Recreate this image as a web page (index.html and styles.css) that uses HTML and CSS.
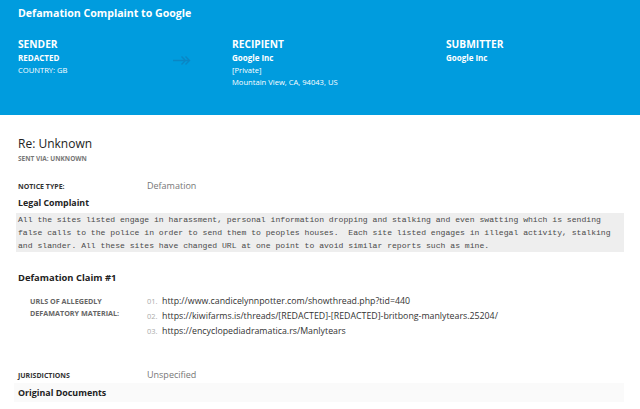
FILE: index.html
```html
<!DOCTYPE html>
<html>
<head>
<meta charset="utf-8">
<link rel="stylesheet" href="styles.css">
</head>
<body>
<header class="hero">
  <h1 class="hero-title">Defamation Complaint to Google</h1>
  <div class="parties">
    <div class="party">
      <h2 class="party-label">SENDER</h2>
      <div class="party-name">REDACTED</div>
      <div class="party-line">COUNTRY: GB</div>
    </div>
    <div class="arrow">
      <svg width="18" height="10" viewBox="0 0 18 10"><path d="M0 5.5H16M8.5 1.5L12.5 5.5L8.5 9.5M12.5 1.5L16.5 5.5L12.5 9.5" fill="none" stroke="#0a86c4" stroke-width="1.4"/></svg>
    </div>
    <div class="party">
      <h2 class="party-label">RECIPIENT</h2>
      <div class="party-name">Google Inc</div>
      <div class="party-line">[Private]</div>
      <div class="party-line">Mountain View, CA, 94043, US</div>
    </div>
    <div class="party">
      <h2 class="party-label">SUBMITTER</h2>
      <div class="party-name">Google Inc</div>
    </div>
  </div>
</header>
<main class="content">
  <h2 class="subject">Re: Unknown</h2>
  <div class="sent-via">SENT VIA: UNKNOWN</div>
  <div class="field notice">
    <div class="field-label">NOTICE TYPE:</div>
    <div class="field-value">Defamation</div>
  </div>
  <h3 class="section-title">Legal Complaint</h3>
  <pre class="complaint">All the sites listed engage in harassment, personal information dropping and stalking and even swatting which is sending
false calls to the police in order to send them to peoples houses.  Each site listed engages in illegal activity, stalking
and slander. All these sites have changed URL at one point to avoid similar reports such as mine.</pre>
  <h3 class="claim-title">Defamation Claim #1</h3>
  <div class="claim">
    <div class="claim-label">URLS OF ALLEGEDLY<br>DEFAMATORY MATERIAL:</div>
    <ol class="urls">
      <li><span class="num">01.</span><span class="url">http://www.candicelynnpotter.com/showthread.php?tid=440</span></li>
      <li><span class="num">02.</span><span class="url">https://kiwifarms.is/threads/[REDACTED]-[REDACTED]-britbong-manlytears.25204/</span></li>
      <li><span class="num">03.</span><span class="url">https://encyclopediadramatica.rs/Manlytears</span></li>
    </ol>
  </div>
  <div class="field juris">
    <div class="field-label">JURISDICTIONS</div>
    <div class="field-value">Unspecified</div>
  </div>
  <h3 class="docs">Original Documents</h3>
</main>
</body>
</html>
```
FILE: styles.css
```css
* { box-sizing: border-box; }
html, body { margin: 0; padding: 0; }
body {
  font-family: "Open Sans", "Noto Sans", sans-serif;
  background: #fff;
  color: #222;
  width: 640px;
  height: 409px;
  overflow: hidden;
}
.hero {
  background: #009cde;
  color: #fff;
  height: 115px;
  padding: 4px 18px 0;
}
.hero-title {
  margin: 0;
  font-size: 10.6px;
  font-weight: 700;
  line-height: 18px;
}
.parties {
  display: grid;
  grid-template-columns: 155px 59px 214px 214px;
  margin-top: 15px;
}
.party-label {
  margin: 0;
  font-size: 10.2px;
  font-weight: 700;
  line-height: 14px;
}
.party-name {
  font-size: 8px;
  font-weight: 700;
  line-height: 13px;
}
.party-line {
  font-size: 7.6px;
  line-height: 12px;
}
.arrow {
  padding-top: 18px;
}
.arrow svg { display: block; }
.content {
  padding: 20px 16px 0 18px;
}
.subject {
  margin: 0;
  font-size: 12px;
  font-weight: 400;
  line-height: 17px;
  color: #222;
}
.sent-via {
  margin-top: 2px;
  font-size: 6.5px;
  font-weight: 700;
  color: #777;
  line-height: 9px;
}
.field {
  display: grid;
  grid-template-columns: 129px 1fr;
  align-items: baseline;
}
.notice { margin-top: 17px; }
.field-label {
  font-size: 7px;
  font-weight: 700;
  color: #333;
}
.field-value {
  font-size: 9px;
  color: #777;
  line-height: 12px;
}
.section-title {
  margin: 5px 0 0;
  font-size: 8.8px;
  font-weight: 700;
  line-height: 13px;
  color: #222;
}
.complaint {
  margin: 3px 0 0 -2px;
  width: 608px;
  background: #eee;
  font-family: "Liberation Mono", "DejaVu Sans Mono", monospace;
  font-size: 8.1px;
  line-height: 13px;
  color: #4a4a4a;
  padding: 0 2px;
  white-space: pre;
}
.claim-title {
  margin: 19px 0 0;
  font-size: 9.4px;
  font-weight: 700;
  line-height: 14px;
  color: #222;
}
.claim {
  display: grid;
  grid-template-columns: 117px 1fr;
  padding-left: 12px;
  margin-top: 9px;
}
.claim-label {
  font-size: 7.2px;
  font-weight: 700;
  color: #666;
  line-height: 12px;
  margin-top: 1px;
}
.urls {
  list-style: none;
  margin: 0;
  padding: 0;
}
.urls li {
  display: flex;
  align-items: baseline;
  height: 15px;
  line-height: 15px;
}
.num {
  width: 15px;
  font-size: 7.5px;
  color: #aaa;
  flex: none;
}
.url {
  font-size: 8.8px;
  color: #333;
  white-space: nowrap;
}
.juris { margin-top: 30px; }
.docs {
  margin: 2px 0 0 -4px;
  width: 610px;
  padding: 3px 4px;
  background: #fafafa;
  font-size: 8.9px;
  font-weight: 700;
  line-height: 13px;
  color: #222;
}
```
